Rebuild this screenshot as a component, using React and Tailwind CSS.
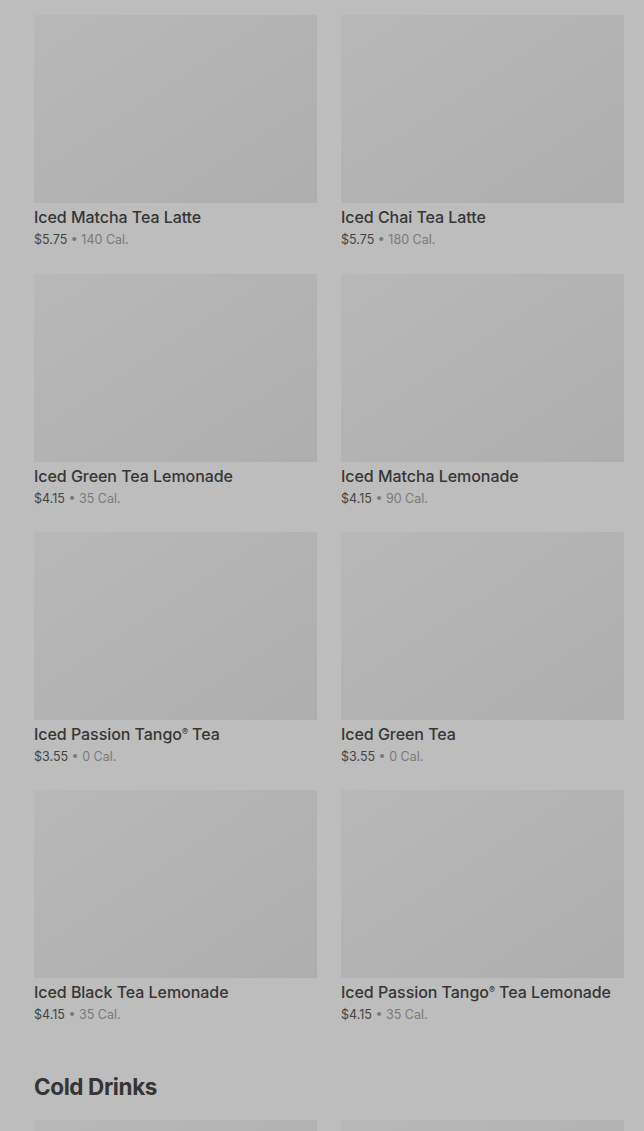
import React from "react";

const teas = [
  { name: "Iced Matcha Tea Latte", price: "$5.75", cal: "140 Cal." },
  { name: "Iced Chai Tea Latte", price: "$5.75", cal: "180 Cal." },
  { name: "Iced Green Tea Lemonade", price: "$4.15", cal: "35 Cal." },
  { name: "Iced Matcha Lemonade", price: "$4.15", cal: "90 Cal." },
  { name: "Iced Passion Tango", reg: true, price: "$3.55", cal: "0 Cal." },
  { name: "Iced Green Tea", price: "$3.55", cal: "0 Cal." },
  { name: "Iced Black Tea Lemonade", price: "$4.15", cal: "35 Cal." },
  { name: "Iced Passion Tango", reg: true, suffix: " Tea Lemonade", price: "$4.15", cal: "35 Cal." },
];

const ProductCard = ({ item }) => (
  <div className="flex flex-col">
    <div className="h-[188px] bg-gradient-to-br from-[#b8b8b8] to-[#aeaeae]" />
    <div className="mt-[4px] h-[20px] text-[16px] leading-[20px] font-medium text-[#363636] tracking-[-0.05px] whitespace-nowrap">
      {item.name}
      {item.reg && (
        <>
          <span className="relative -top-[5px] text-[9px] leading-none">®</span>
          {item.suffix || " Tea"}
        </>
      )}
    </div>
    <div className="mt-[4px] text-[12.5px] leading-[18px] text-[#444]">
      {item.price} <span className="text-[#7a7a7a]">• {item.cal}</span>
    </div>
  </div>
);

export default function App() {
  return (
    <div
      className="bg-[#bdbdbd] pl-[34px] pr-[20px] pt-[15.4px] overflow-hidden h-[1131px]"
      style={{ fontFamily: "Inter, 'Noto Sans', sans-serif" }}
    >
      <div className="grid grid-cols-2 gap-x-[24px] gap-y-[24.33px]">
        {teas.map((t, i) => (
          <ProductCard key={i} item={t} />
        ))}
      </div>
      <h2 className="mt-[49px] text-[22.5px] leading-[28px] font-bold text-[#353535] tracking-[-0.4px]">
        Cold Drinks
      </h2>
      <div className="grid grid-cols-2 gap-x-[24px] mt-[19px]">
        <div className="h-[188px] bg-gradient-to-br from-[#b8b8b8] to-[#aeaeae]" />
        <div className="h-[188px] bg-gradient-to-br from-[#b8b8b8] to-[#aeaeae]" />
      </div>
    </div>
  );
}
